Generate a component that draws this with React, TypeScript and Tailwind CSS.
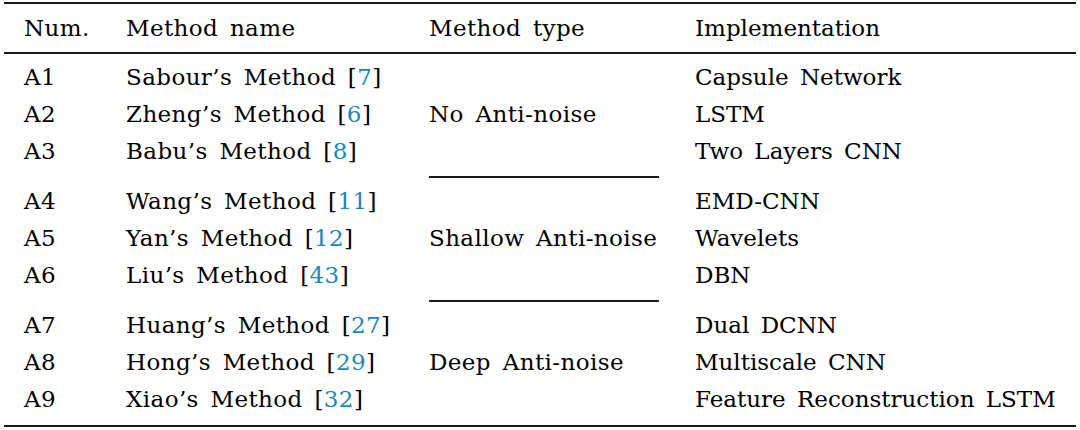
import React from "react";

type Row = { num: string; name: string; cite: string; impl: string };
type Group = { type: string; rows: Row[]; last?: boolean };

const groups: Group[] = [
  {
    type: "No Anti-noise",
    rows: [
      { num: "A1", name: "Sabour’s Method", cite: "7", impl: "Capsule Network" },
      { num: "A2", name: "Zheng’s Method", cite: "6", impl: "LSTM" },
      { num: "A3", name: "Babu’s Method", cite: "8", impl: "Two Layers CNN" },
    ],
  },
  {
    type: "Shallow Anti-noise",
    rows: [
      { num: "A4", name: "Wang’s Method", cite: "11", impl: "EMD-CNN" },
      { num: "A5", name: "Yan’s Method", cite: "12", impl: "Wavelets" },
      { num: "A6", name: "Liu’s Method", cite: "43", impl: "DBN" },
    ],
  },
  {
    type: "Deep Anti-noise",
    last: true,
    rows: [
      { num: "A7", name: "Huang’s Method", cite: "27", impl: "Dual DCNN" },
      { num: "A8", name: "Hong’s Method", cite: "29", impl: "Multiscale CNN" },
      { num: "A9", name: "Xiao’s Method", cite: "32", impl: "Feature Reconstruction LSTM" },
    ],
  },
];

function GroupBlock({ g }: { g: Group }) {
  return (
    <div className={`flex pl-[20px] pt-[5px] ${g.last ? "pb-[7px]" : "pb-[6px]"}`}>
      <div className="flex flex-col tracking-[0.4px]">
        {g.rows.map((r) => (
          <div key={r.num} className="flex h-[37px] items-center">
            <div className="w-[102px]">{r.num}</div>
            <div className="w-[303px] whitespace-nowrap">
              {r.name} [<span className="text-[#2088b6]">{r.cite}</span>]
            </div>
          </div>
        ))}
      </div>
      <div className="w-[266px] flex items-center whitespace-nowrap tracking-[0.4px]">{g.type}</div>
      <div className="flex flex-col">
        {g.rows.map((r) => (
          <div key={r.num} className="flex h-[37px] items-center whitespace-nowrap">
            {r.impl}
          </div>
        ))}
      </div>
    </div>
  );
}

export default function App() {
  return (
    <div
      className="w-[1080px] h-[430px] bg-white text-black px-[4px] pt-[2px] text-[23px] leading-none [word-spacing:4px]"
      style={{ fontFamily: '"DejaVu Serif", "Liberation Serif", serif' }}
    >
      <div className="h-[2px] bg-[#1a1a1a]" />
      <div className="flex h-[48px] items-center pl-[20px] whitespace-nowrap">
        <div className="w-[102px] tracking-[0.4px]">Num.</div>
        <div className="w-[303px] tracking-[0.4px]">Method name</div>
        <div className="w-[266px] tracking-[0.4px]">Method type</div>
        <div>Implementation</div>
      </div>
      <div className="h-[2px] bg-[#1a1a1a]" />
      {groups.map((g, i) => (
        <React.Fragment key={g.type}>
          <GroupBlock g={g} />
          {i < groups.length - 1 && (
            <div className="flex h-[2px]">
              <div className="w-[425px]" />
              <div className="w-[230px] bg-[#1a1a1a]" />
            </div>
          )}
        </React.Fragment>
      ))}
      <div className="h-[2px] bg-[#1a1a1a]" />
    </div>
  );
}
